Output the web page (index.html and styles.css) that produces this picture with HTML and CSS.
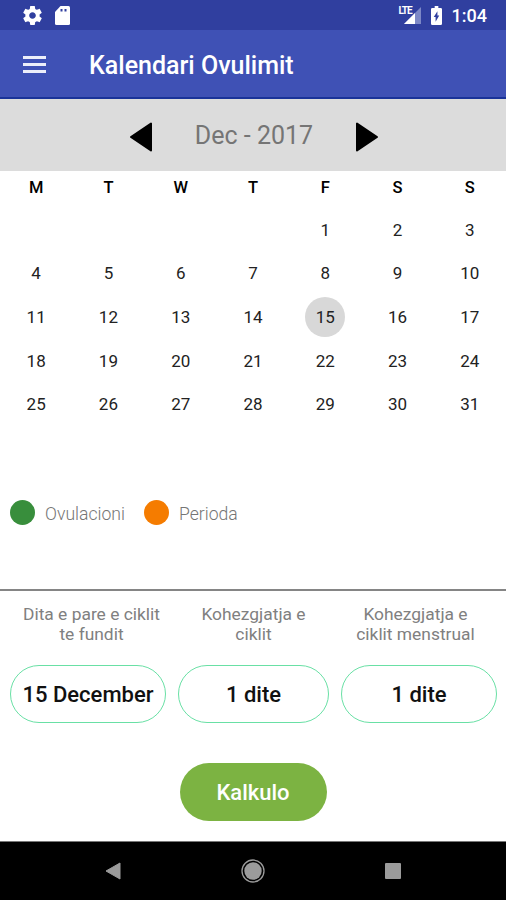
FILE: index.html
```html
<!DOCTYPE html>
<html lang="sq">

<head>
    <meta charset="UTF-8">
    <meta name="viewport" content="width=device-width, initial-scale=1.0">
    <title>Kalendari Ovulimit</title>
    <link rel="stylesheet" href="styles.css">
</head>

<body>
    <div class="status">
        <svg class="gear" width="19" height="19" viewBox="2 2 20 20">
            <path fill="#fff" d="M19.43 12.98c.04-.32.07-.64.07-.98s-.03-.66-.07-.98l2.11-1.65c.19-.15.24-.42.12-.64l-2-3.46c-.12-.22-.39-.3-.61-.22l-2.49 1c-.52-.4-1.08-.73-1.69-.98l-.38-2.65C14.46 2.18 14.25 2 14 2h-4c-.25 0-.46.18-.49.42l-.38 2.65c-.61.25-1.17.59-1.69.98l-2.49-1c-.23-.09-.49 0-.61.22l-2 3.46c-.13.22-.07.49.12.64l2.11 1.65c-.04.32-.07.65-.07.98s.03.66.07.98l-2.11 1.65c-.19.15-.24.42-.12.64l2 3.46c.12.22.39.3.61.22l2.49-1c.52.4 1.08.73 1.69.98l.38 2.65c.03.24.24.42.49.42h4c.25 0 .46-.18.49-.42l.38-2.65c.61-.25 1.17-.59 1.69-.98l2.49 1c.23.09.49 0 .61-.22l2-3.46c.12-.22.07-.49-.12-.64l-2.11-1.65zM12 15.5c-1.93 0-3.5-1.57-3.5-3.5s1.57-3.5 3.5-3.5 3.5 1.57 3.5 3.5-1.57 3.5-3.5 3.5z"/>
        </svg>
        <svg class="card" width="15" height="19" viewBox="0 0 15 19">
            <path fill="#fff" d="M5.500 0h8q1.500 0 1.500 1.500v16q0 1.500-1.500 1.500h-12Q0 19 0 17.500V6z"/>
            <path fill="#303f9f" d="M5.500 3h2v2.500h-2zM9.500 3h2v2.500h-2z"/>
        </svg>
        <div class="signal">
            <span>LTE</span>
            <svg width="17" height="17" viewBox="0 0 17 17">
                <path fill="#7d88c6" d="M17 0v17H0z"/>
                <path fill="#fff" d="M11 6v11H0z"/>
            </svg>
        </div>
        <svg class="battery" width="11" height="19" viewBox="0 0 12 20" preserveAspectRatio="none">
            <path fill="#fff" d="M4 0h4v2h2.600q1.400 0 1.400 1.400v15.200q0 1.400-1.400 1.400H1.400Q0 20 0 18.600V3.400Q0 2 1.400 2H4z"/>
            <path fill="#303f9f" d="M7 5.500v4.500h2L5 16.500v-5H3z"/>
        </svg>
        <span class="time">1:04</span>
    </div>

    <div class="toolbar">
        <div class="menu">
            <span></span>
            <span></span>
            <span></span>
        </div>
        <h1>Kalendari Ovulimit</h1>
    </div>

    <div class="month">
        <svg width="24" height="30" viewBox="0 0 24 30">
            <path stroke="#000" stroke-width="2" stroke-linejoin="round" d="M22 1.500v27L2 15z"/>
        </svg>
        <span>Dec - 2017</span>
        <svg width="24" height="30" viewBox="0 0 24 30">
            <path stroke="#000" stroke-width="2" stroke-linejoin="round" d="M2 1.500v27L22 15z"/>
        </svg>
    </div>

    <table>
        <thead>
            <tr>
                <th>M</th>
                <th>T</th>
                <th>W</th>
                <th>T</th>
                <th>F</th>
                <th>S</th>
                <th>S</th>
            </tr>
        </thead>
        <tbody>
            <tr>
                <td></td>
                <td></td>
                <td></td>
                <td></td>
                <td>1</td>
                <td>2</td>
                <td>3</td>
            </tr>
            <tr>
                <td>4</td>
                <td>5</td>
                <td>6</td>
                <td>7</td>
                <td>8</td>
                <td>9</td>
                <td>10</td>
            </tr>
            <tr>
                <td>11</td>
                <td>12</td>
                <td>13</td>
                <td>14</td>
                <td><span class="today">15</span></td>
                <td>16</td>
                <td>17</td>
            </tr>
            <tr>
                <td>18</td>
                <td>19</td>
                <td>20</td>
                <td>21</td>
                <td>22</td>
                <td>23</td>
                <td>24</td>
            </tr>
            <tr>
                <td>25</td>
                <td>26</td>
                <td>27</td>
                <td>28</td>
                <td>29</td>
                <td>30</td>
                <td>31</td>
            </tr>
        </tbody>
    </table>

    <div class="legend">
        <span class="dot green"></span>
        <span class="name">Ovulacioni</span>
        <span class="dot orange"></span>
        <span class="name">Perioda</span>
    </div>

    <div class="labels">
        <label>Dita e pare e ciklit<br>te fundit</label>
        <label>Kohezgjatja e<br>ciklit</label>
        <label>Kohezgjatja e<br>ciklit menstrual</label>
    </div>

    <div class="fields">
        <button>15 December</button>
        <button>1 dite</button>
        <button>1 dite</button>
    </div>

    <button class="kalkulo">Kalkulo</button>

    <div class="navbar">
        <svg width="16" height="18" viewBox="0 0 16 18">
            <path fill="#9b9b9b" stroke="#9b9b9b" stroke-linejoin="round" d="M15 1v16L1 9z"/>
        </svg>
        <svg width="24" height="24" viewBox="0 0 24 24">
            <circle cx="12" cy="12" r="11" fill="none" stroke="#9b9b9b" stroke-width="1.300"/>
            <circle cx="12" cy="12" r="8.700" fill="#9b9b9b"/>
        </svg>
        <svg width="16" height="16" viewBox="0 0 16 16">
            <rect width="16" height="16" rx="1" fill="#9b9b9b"/>
        </svg>
    </div>
</body>

</html>
```
FILE: styles.css
```css
* {
    box-sizing: border-box;
}

body {
    margin: 0;
    height: 900px;
    display: flex;
    flex-direction: column;
    background-color: #fff;
    font-family: Roboto, sans-serif;
    overflow: hidden;
}

svg {
    display: block;
    flex: none;
}

.status {
    height: 30px;
    display: flex;
    align-items: center;
    padding: 0 19px 0 23px;
    background-color: #303f9f;
    color: #fff;
}

.card {
    margin-left: 13px;
}

.signal {
    position: relative;
    margin-left: auto;
    padding-top: 1px;
}

.signal span {
    position: absolute;
    left: -5px;
    top: 0;
    font-size: 10px;
    line-height: 9px;
    font-weight: bold;
    letter-spacing: -1px;
    padding-right: 1px;
    background-color: #303f9f;
}

.battery {
    margin-left: 10px;
}

.time {
    margin-left: 10px;
    font-size: 18px;
    font-weight: 500;
    line-height: 30px;
    padding-top: 2px;
}

.toolbar {
    height: 69px;
    display: flex;
    align-items: center;
    padding: 1px 23px 0;
    background-color: #3f51b5;
    border-bottom: 2px solid #1a3399;
}

.menu {
    width: 23px;
    margin-right: 43px;
}

.menu span {
    display: block;
    height: 3px;
    margin: 4px 0;
    background-color: #eceefa;
}

h1 {
    margin: 2px 0 0;
    color: #fff;
    font-size: 25px;
    font-weight: 500;
}

.month {
    height: 72px;
    display: flex;
    justify-content: center;
    align-items: center;
    gap: 42px;
    padding: 4px 0 0 2px;
    background-color: #dcdcdc;
    color: #757575;
    font-size: 25px;
}

.month span {
    margin-top: -3px;
}

table {
    table-layout: fixed;
    width: 100%;
    border-collapse: collapse;
    color: #222;
}

th {
    height: 37px;
    padding: 0 0 5px;
    font-size: 16.5px;
    font-weight: 500;
    color: #000;
}

td {
    height: 43.6px;
    padding: 0;
    font-size: 17px;
    text-align: center;
}

.today {
    display: block;
    width: 40px;
    height: 40px;
    margin: 0 auto;
    border-radius: 50%;
    line-height: 40px;
    background-color: #d8d8d8;
}

.legend {
    height: 26px;
    margin-top: 74px;
    display: flex;
    align-items: center;
    padding-left: 10px;
    color: #757575;
    font-size: 17.6px;
    font-weight: 300;
}

.dot {
    width: 25px;
    height: 25px;
    margin-right: 10px;
    border-radius: 50%;
}

.green {
    background-color: #388e3c;
}

.orange {
    background-color: #f57c00;
}

.name {
    margin-right: 19px;
    padding-top: 2px;
}

.labels {
    height: 76px;
    margin-top: 63px;
    display: grid;
    grid-template-columns: repeat(3, 162px);
    justify-content: center;
    padding: 13px 0 0 1px;
    border-top: 2px solid #858585;
}

label {
    color: #808080;
    font-size: 17.4px;
    line-height: 20px;
    text-align: center;
    white-space: nowrap;
}

.fields {
    display: grid;
    grid-template-columns: 156px 151px 156px;
    gap: 12px;
    padding: 0 10px;
}

button {
    display: block;
    width: 100%;
    height: 58px;
    padding: 2px 0 0;
    border: 1.5px solid #69e0a5;
    border-radius: 29px;
    background-color: #fff;
    color: #111;
    font-family: inherit;
    font-size: 22px;
    font-weight: 500;
    white-space: nowrap;
}

.kalkulo {
    width: 147px;
    margin: 40px auto 0;
    border: none;
    background-color: #7cb342;
    color: #fff;
}

.navbar {
    height: 59px;
    margin-top: auto;
    display: flex;
    justify-content: space-between;
    align-items: center;
    padding: 0 105px;
    background-color: #000;
    border-top: 1px solid #777;
}
```
